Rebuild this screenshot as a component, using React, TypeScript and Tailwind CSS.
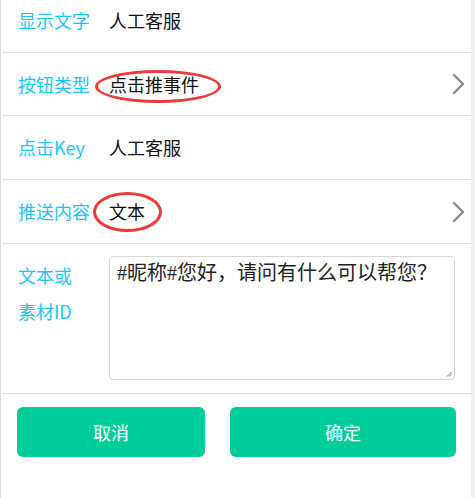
import React from "react";

const font = { fontFamily: '"Noto Sans CJK SC", "Noto Sans", sans-serif' };

function Chevron() {
  return (
    <svg width="13" height="21" viewBox="0 0 13 21" className="absolute right-[6px] top-1/2 -translate-y-1/2">
      <path d="M2 1.5 L11 10.5 L2 19.5" fill="none" stroke="#8a8a8a" strokeWidth="2.4" strokeLinecap="round" strokeLinejoin="round" />
    </svg>
  );
}

function Row({
  label,
  value,
  h,
  chevron,
  ellipse,
}: {
  label: string;
  value: string;
  h: string;
  chevron?: boolean;
  ellipse?: React.ReactNode;
}) {
  return (
    <div className={`relative flex items-center border-b border-[#dedede] ${h}`}>
      <div className="w-[107px] pl-[16px] text-[18px] text-[#1ec4f6]">{label}</div>
      <div className="text-[18px] text-[#111]">{value}</div>
      {ellipse}
      {chevron && <Chevron />}
    </div>
  );
}

export default function App() {
  return (
    <div className="flex h-[498px] w-[475px] overflow-hidden bg-[#f1f1f1]" style={font}>
      <div className="h-full w-[471px] border-l border-[#dcdcdc] bg-white">
        <div className="ml-px -mt-[11px]">
          <Row label="显示文字" value="人工客服" h="h-[64px]" />
          <Row
            label="按钮类型"
            value="点击推事件"
            h="h-[63px]"
            chevron
            ellipse={
              <div className="pointer-events-none absolute left-[93px] top-[17px] h-[33px] w-[126px] rounded-[50%] border-[3px] border-[#ea3a3a]" />
            }
          />
          <Row label="点击Key" value="人工客服" h="h-[64px]" />
          <Row
            label="推送内容"
            value="文本"
            h="h-[64px]"
            chevron
            ellipse={
              <div className="pointer-events-none absolute left-[91px] top-[12px] h-[40px] w-[69px] rounded-[50%] border-[3px] border-[#ea3a3a]" />
            }
          />
          <div className="flex border-b border-[#dedede] pb-[13px]">
            <div className="w-[107px] pl-[16px] pt-[13px] text-[18px] leading-[36px] text-[#1ec4f6]">
              文本或
              <br />
              素材ID
            </div>
            <div className="relative mt-[12px] h-[124px] w-[346px]">
              <textarea
                className="h-full w-full resize-none rounded-[4px] border border-[#d6d6d6] px-[7px] py-[2px] text-[20px] leading-[28px] text-[#222] outline-none"
                style={{ fontFamily: '"Liberation Serif", "Noto Sans CJK SC", serif' }}
                defaultValue="#昵称#您好，请问有什么可以帮您？"
              />
              <svg width="6" height="6" viewBox="0 0 6 6" className="pointer-events-none absolute bottom-[3px] right-[3px]">
                <path d="M5.5 1 L1 5.5 M5.5 3.5 L3.5 5.5" stroke="#777" strokeWidth="1" />
              </svg>
            </div>
          </div>
          <div className="flex gap-[25px] pl-[15px] pt-[13px]">
            <button className="h-[50px] w-[188px] rounded-[6px] bg-[#00cd9a] text-[18px] text-white">取消</button>
            <button className="h-[50px] w-[226px] rounded-[6px] bg-[#00cd9a] text-[18px] text-white">确定</button>
          </div>
        </div>
      </div>
    </div>
  );
}
